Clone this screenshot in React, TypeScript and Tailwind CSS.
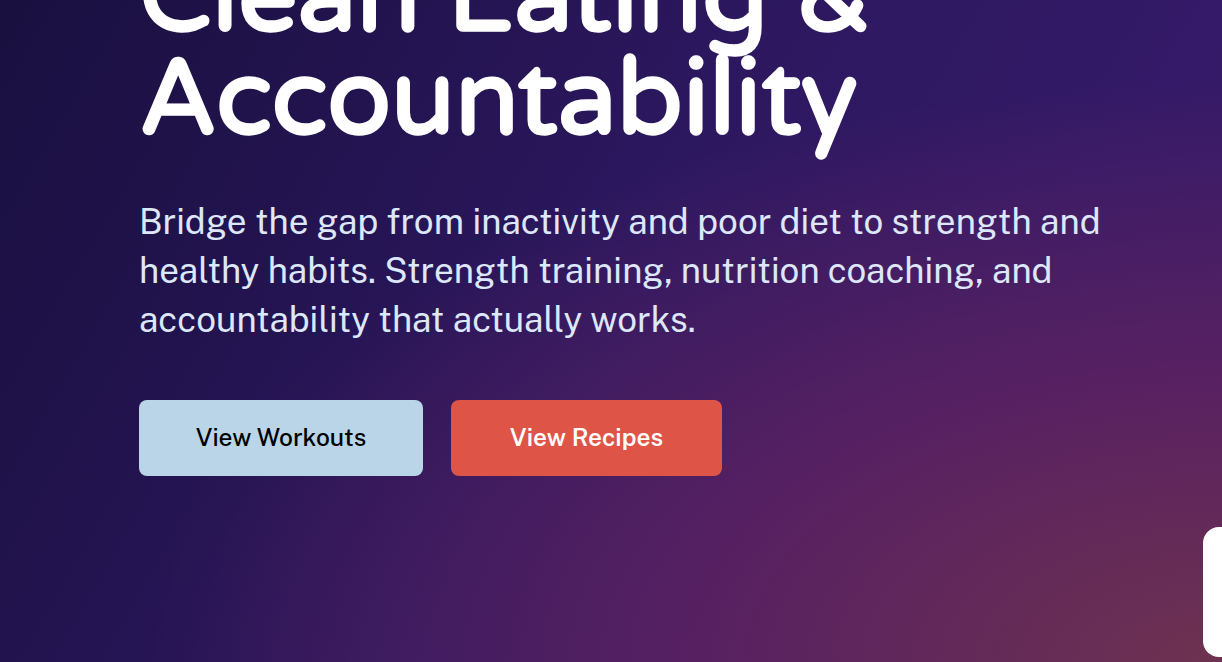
export default function App() {
  return (
    <div className="relative h-[662px] w-full overflow-hidden bg-[radial-gradient(ellipse_at_bottom_right,rgba(110,50,80,1)_0%,rgba(94,34,96,0.85)_30%,rgba(94,34,96,0)_62%),linear-gradient(120deg,#19103f_0%,#22134e_24%,#2d1860_50%,#341a68_76%,#3a1b68_100%)]">
      <div className="pl-[139px] pr-6">
        <h1
          className="mt-[-54px] text-[105px] font-bold leading-[103px] text-white"
          style={{ fontFamily: '"Varela Round", "Nunito", Lato, sans-serif' }}
        >
          Clean Eating &amp;
          <br />
          Accountability
        </h1>
        <p
          className="mt-[45px] max-w-[1000px] text-[35px] leading-[49px] text-[#dde7fa]"
          style={{ fontFamily: '"Public Sans", Inter, sans-serif' }}
        >
          Bridge the gap from inactivity and poor diet to strength and healthy habits. Strength training, nutrition
          coaching, and accountability that actually works.
        </p>
        <div className="mt-[56px] flex gap-[28px]" style={{ fontFamily: '"Public Sans", Inter, sans-serif' }}>
          <button className="h-[76px] w-[284px] rounded-[8px] bg-[#bad4e8] text-[24.5px] font-medium text-black">
            View Workouts
          </button>
          <button className="h-[76px] w-[271px] rounded-[8px] bg-[#de5446] text-[24.5px] font-semibold text-white">
            View Recipes
          </button>
        </div>
      </div>
      <div className="absolute left-[1203px] top-[527px] h-[130px] w-[300px] rounded-[16px] bg-white" />
    </div>
  );
}
